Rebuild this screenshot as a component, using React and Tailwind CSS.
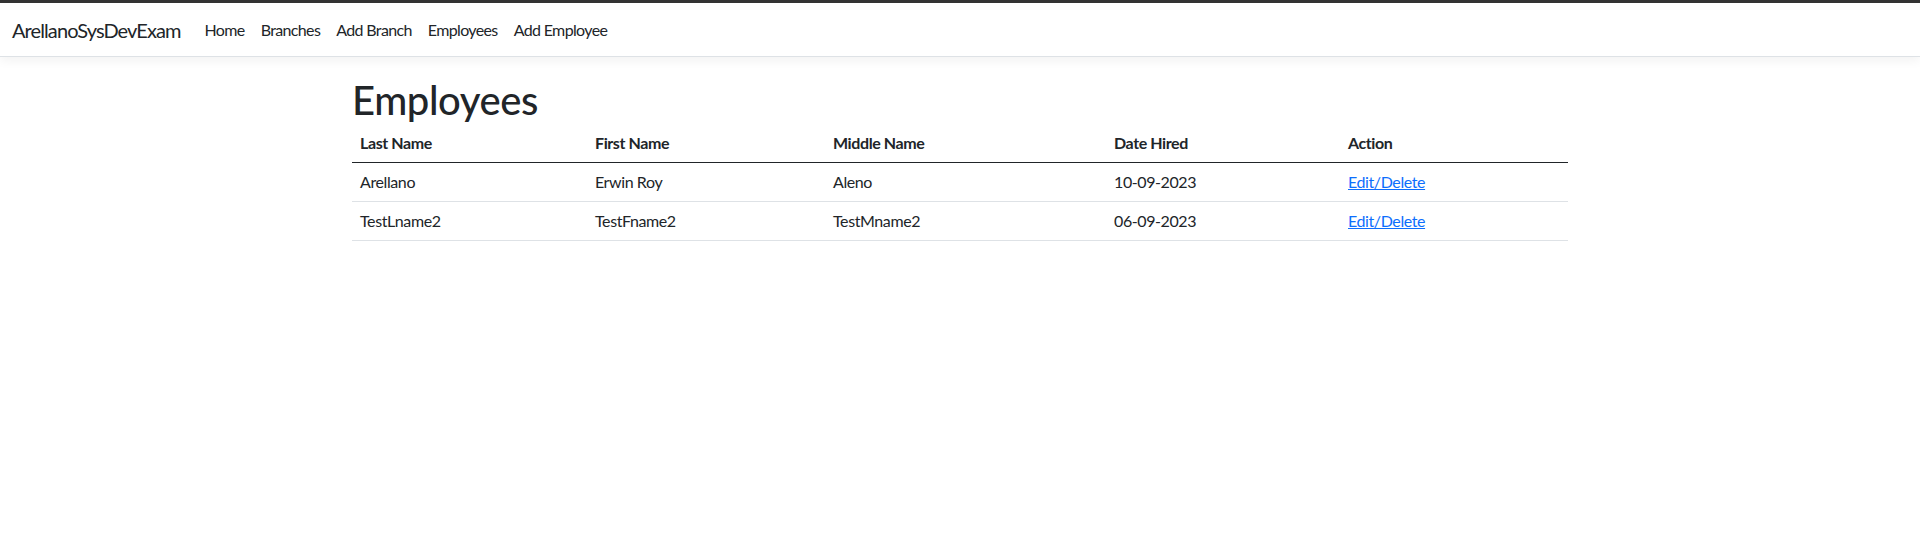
import React from "react";

const rows = [
  { last: "Arellano", first: "Erwin Roy", middle: "Aleno", hired: "10-09-2023" },
  { last: "TestLname2", first: "TestFname2", middle: "TestMname2", hired: "06-09-2023" },
];

const navLinks = ["Home", "Branches", "Add Branch", "Employees", "Add Employee"];

export default function App() {
  return (
    <div className="min-h-screen bg-white text-[#212529] font-['Segoe_UI','Lato','Liberation_Sans',sans-serif]">
      {/* navbar */}
      <nav className="border-t-[3px] border-t-[#333] border-b border-b-[#dee2e6] shadow-[0_4px_10px_rgba(0,0,0,0.05)] bg-white">
        <div className="h-[53px] flex items-center px-3">
          <a href="#" className="text-[20px] tracking-[-0.045em] text-[#212529] mr-4">ArellanoSysDevExam</a>
          <ul className="flex items-center">
            {navLinks.map((l) => (
              <li key={l}>
                <a href="#" className="block px-2 text-[16px] tracking-[-0.04em] text-[#212529]">{l}</a>
              </li>
            ))}
          </ul>
        </div>
      </nav>

      {/* main */}
      <main className="w-[1216px] mx-auto pt-[19px]">
        <h1 className="text-[40px] font-medium leading-[1.2] tracking-[-0.01em] mb-0">Employees</h1>
        <table className="w-full text-[16px] leading-[22px] tracking-[-0.025em] border-collapse">
          <thead>
            <tr className="border-b border-b-[#212529]">
              <th className="w-[235px] text-left font-bold px-2 py-2">Last Name</th>
              <th className="w-[238px] text-left font-bold px-2 py-2">First Name</th>
              <th className="w-[281px] text-left font-bold px-2 py-2">Middle Name</th>
              <th className="w-[234px] text-left font-bold px-2 py-2">Date Hired</th>
              <th className="text-left font-bold px-2 py-2">Action</th>
            </tr>
          </thead>
          <tbody>
            {rows.map((r) => (
              <tr key={r.last} className="border-b border-b-[#dee2e6]">
                <td className="px-2 py-2">{r.last}</td>
                <td className="px-2 py-2">{r.first}</td>
                <td className="px-2 py-2">{r.middle}</td>
                <td className="px-2 py-2">{r.hired}</td>
                <td className="px-2 py-2">
                  <a href="#" className="text-[#0d6efd] underline">Edit/Delete</a>
                </td>
              </tr>
            ))}
          </tbody>
        </table>
      </main>
    </div>
  );
}
